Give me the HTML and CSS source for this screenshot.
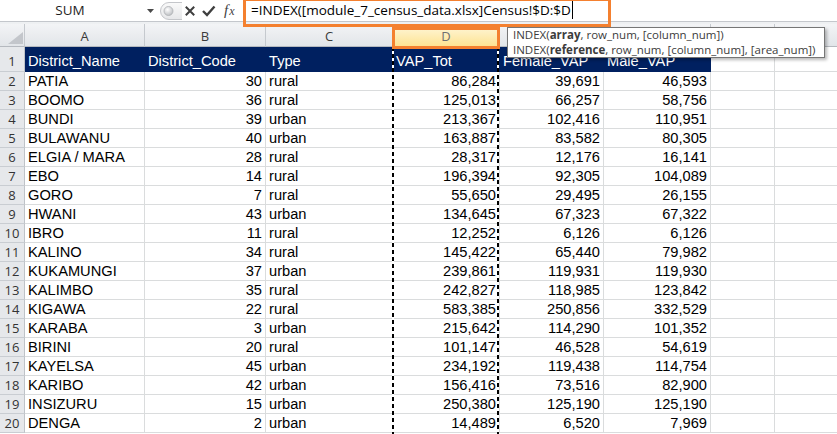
FILE: index.html
```html
<!DOCTYPE html>
<html>
<head>
<meta charset="utf-8">
<title>Excel INDEX</title>
<link rel="stylesheet" href="styles.css">
</head>
<body>
<div class="app">
  <div class="fbar">
    <div class="namebox">
      <span class="nm">SUM</span>
      <svg class="dd" width="7" height="4" viewBox="0 0 7 4"><polygon points="0,0 7,0 3.5,4" fill="#4a4a4a"/></svg>
    </div>
    <div class="tools">
      <svg width="85" height="21" viewBox="0 0 85 21">
        <defs>
          <radialGradient id="grip" cx="0.4" cy="0.35" r="0.7">
            <stop offset="0" stop-color="#ffffff"/>
            <stop offset="1" stop-color="#b9bcc0"/>
          </radialGradient>
          <linearGradient id="pill" x1="0" y1="0" x2="0" y2="1">
            <stop offset="0" stop-color="#fafafa"/>
            <stop offset="1" stop-color="#e6e7e9"/>
          </linearGradient>
        </defs>
        <path d="M24 2.5 H11 a8.5 8.5 0 0 0 0 17 H24" fill="url(#pill)" stroke="#c4c6ca" stroke-width="1"/>
        <circle cx="10.5" cy="11" r="4.5" fill="url(#grip)" stroke="#aeb1b5" stroke-width="0.8"/>
        <path d="M28.5 7.5 L35.5 14.5 M35.5 7.5 L28.5 14.5" stroke="#3f3f3f" stroke-width="2" stroke-linecap="square"/>
        <path d="M45 11 L49 15 L56.5 6.5" stroke="#3f3f3f" stroke-width="2.4" fill="none"/>
      </svg>
      <span class="fx"><i>f</i><i class="x">x</i></span>
    </div>
    <div class="finput"><span class="ftext">=INDEX([module_7_census_data.xlsx]Census!$D:$D</span></div>
  </div>
  <div class="gap"></div>
  <div class="sheet">
    <div class="ch corner"><svg width="15" height="12" viewBox="0 0 15 12"><polygon points="15,0 15,12 0,12" fill="#c3c6cb"/></svg></div>
    <div class="ch">A</div><div class="ch">B</div><div class="ch">C</div><div class="ch sel">D</div><div class="ch">E</div><div class="ch">F</div><div class="ch">G</div><div class="ch"></div>

    <div class="rh r1">1</div><div class="c h">District_Name</div><div class="c h">District_Code</div><div class="c h">Type</div><div class="c h">VAP_Tot</div><div class="c h">Female_VAP</div><div class="c h">Male_VAP</div><div class="c"></div><div class="c"></div>

    <div class="rh">2</div><div class="c">PATIA</div><div class="c n">30</div><div class="c">rural</div><div class="c n">86,284</div><div class="c n">39,691</div><div class="c n">46,593</div><div class="c"></div><div class="c"></div>
    <div class="rh">3</div><div class="c">BOOMO</div><div class="c n">36</div><div class="c">rural</div><div class="c n">125,013</div><div class="c n">66,257</div><div class="c n">58,756</div><div class="c"></div><div class="c"></div>
    <div class="rh">4</div><div class="c">BUNDI</div><div class="c n">39</div><div class="c">urban</div><div class="c n">213,367</div><div class="c n">102,416</div><div class="c n">110,951</div><div class="c"></div><div class="c"></div>
    <div class="rh">5</div><div class="c">BULAWANU</div><div class="c n">40</div><div class="c">urban</div><div class="c n">163,887</div><div class="c n">83,582</div><div class="c n">80,305</div><div class="c"></div><div class="c"></div>
    <div class="rh">6</div><div class="c">ELGIA / MARA</div><div class="c n">28</div><div class="c">rural</div><div class="c n">28,317</div><div class="c n">12,176</div><div class="c n">16,141</div><div class="c"></div><div class="c"></div>
    <div class="rh">7</div><div class="c">EBO</div><div class="c n">14</div><div class="c">rural</div><div class="c n">196,394</div><div class="c n">92,305</div><div class="c n">104,089</div><div class="c"></div><div class="c"></div>
    <div class="rh">8</div><div class="c">GORO</div><div class="c n">7</div><div class="c">rural</div><div class="c n">55,650</div><div class="c n">29,495</div><div class="c n">26,155</div><div class="c"></div><div class="c"></div>
    <div class="rh">9</div><div class="c">HWANI</div><div class="c n">43</div><div class="c">urban</div><div class="c n">134,645</div><div class="c n">67,323</div><div class="c n">67,322</div><div class="c"></div><div class="c"></div>
    <div class="rh">10</div><div class="c">IBRO</div><div class="c n">11</div><div class="c">rural</div><div class="c n">12,252</div><div class="c n">6,126</div><div class="c n">6,126</div><div class="c"></div><div class="c"></div>
    <div class="rh">11</div><div class="c">KALINO</div><div class="c n">34</div><div class="c">rural</div><div class="c n">145,422</div><div class="c n">65,440</div><div class="c n">79,982</div><div class="c"></div><div class="c"></div>
    <div class="rh">12</div><div class="c">KUKAMUNGI</div><div class="c n">37</div><div class="c">urban</div><div class="c n">239,861</div><div class="c n">119,931</div><div class="c n">119,930</div><div class="c"></div><div class="c"></div>
    <div class="rh">13</div><div class="c">KALIMBO</div><div class="c n">35</div><div class="c">rural</div><div class="c n">242,827</div><div class="c n">118,985</div><div class="c n">123,842</div><div class="c"></div><div class="c"></div>
    <div class="rh">14</div><div class="c">KIGAWA</div><div class="c n">22</div><div class="c">rural</div><div class="c n">583,385</div><div class="c n">250,856</div><div class="c n">332,529</div><div class="c"></div><div class="c"></div>
    <div class="rh">15</div><div class="c">KARABA</div><div class="c n">3</div><div class="c">urban</div><div class="c n">215,642</div><div class="c n">114,290</div><div class="c n">101,352</div><div class="c"></div><div class="c"></div>
    <div class="rh">16</div><div class="c">BIRINI</div><div class="c n">20</div><div class="c">rural</div><div class="c n">101,147</div><div class="c n">46,528</div><div class="c n">54,619</div><div class="c"></div><div class="c"></div>
    <div class="rh">17</div><div class="c">KAYELSA</div><div class="c n">45</div><div class="c">urban</div><div class="c n">234,192</div><div class="c n">119,438</div><div class="c n">114,754</div><div class="c"></div><div class="c"></div>
    <div class="rh">18</div><div class="c">KARIBO</div><div class="c n">42</div><div class="c">urban</div><div class="c n">156,416</div><div class="c n">73,516</div><div class="c n">82,900</div><div class="c"></div><div class="c"></div>
    <div class="rh">19</div><div class="c">INSIZURU</div><div class="c n">15</div><div class="c">urban</div><div class="c n">250,380</div><div class="c n">125,190</div><div class="c n">125,190</div><div class="c"></div><div class="c"></div>
    <div class="rh">20</div><div class="c">DENGA</div><div class="c n">2</div><div class="c">urban</div><div class="c n">14,489</div><div class="c n">6,520</div><div class="c n">7,969</div><div class="c"></div><div class="c"></div>
  </div>

  <div class="ants ants-l"></div>
  <div class="ants ants-r"></div>
  <div class="hl hl-formula"></div>
  <div class="hl hl-col"></div>
  <div class="tip">
    <div>INDEX(<b>array</b>, row_num, [column_num])</div>
    <div>INDEX(<b>reference</b>, row_num, [column_num], [area_num])</div>
  </div>
</div>
</body>
</html>
```

FILE: styles.css
```css
html, body {
  margin: 0;
  padding: 0;
  background: #fff;
  overflow: hidden;
}

.app {
  position: relative;
  width: 837px;
  height: 434px;
  overflow: hidden;
  font-family: "Liberation Sans", Arial, sans-serif;
}

/* formula bar */
.fbar {
  display: flex;
  height: 21px;
  border-bottom: 1px solid #c4c7cc;
  background: #fff;
}

.namebox {
  width: 158px;
  display: flex;
  align-items: center;
}

.nm {
  width: 140px;
  text-align: center;
  font-family: "Open Sans", sans-serif;
  font-size: 13.5px;
  color: #1e1e1e;
  line-height: 21px;
}

.dd {
  margin-left: 7px;
  margin-top: 1px;
}

.tools {
  width: 85px;
  position: relative;
  display: flex;
  align-items: center;
}

.fx {
  position: absolute;
  left: 66px;
  top: 1px;
  font-family: "Liberation Serif", serif;
  font-size: 15px;
  color: #3f3f3f;
  line-height: 19px;
}

.fx i {
  font-style: italic;
}

.fx .x {
  font-size: 12px;
  margin-left: 1px;
}

.finput {
  flex: 1;
  padding-left: 8px;
  font-family: "Open Sans", sans-serif;
  font-size: 13.5px;
  color: #000;
  line-height: 21px;
  white-space: nowrap;
}

.ftext {
  border-right: 1px solid #000;
  padding-right: 1px;
}

.gap {
  height: 2px;
  background: #eef0f2;
}

/* sheet */
.sheet {
  display: grid;
  grid-template-columns: 25px 120px 121px 127px 107px 104px 107px 64px 120px;
  grid-template-rows: 23px 25px repeat(19, 19px);
}

.ch {
  box-sizing: border-box;
  background: linear-gradient(#f3f4f6, #e2e5e9);
  border-right: 1px solid #c5c9ce;
  border-bottom: 1px solid #b5b9bf;
  font-family: "Open Sans", sans-serif;
  font-size: 13px;
  color: #3a3a3a;
  text-align: center;
  line-height: 20px;
  padding-top: 2px;
}

.ch.corner {
  display: flex;
  align-items: flex-end;
  justify-content: flex-end;
  padding: 0 1px 2px 0;
}

.ch.sel {
  background: linear-gradient(#fff8de, #fde393);
  color: #6f6f6f;
}

.rh {
  box-sizing: border-box;
  background: #e6e8eb;
  border-right: 1px solid #bfc3c8;
  border-bottom: 1px solid #c9cdd2;
  font-family: "Open Sans", sans-serif;
  font-size: 13px;
  color: #333;
  text-align: center;
  line-height: 19px;
}

.rh.r1 {
  padding-top: 5px;
}

.c {
  box-sizing: border-box;
  border-right: 1px solid #dadcdd;
  border-bottom: 1px solid #dadcdd;
  font-size: 14.67px;
  line-height: 19px;
  padding: 0 3px;
  white-space: nowrap;
  overflow: hidden;
  color: #000;
}

.n {
  text-align: right;
}

.c.h {
  background: #002060;
  border-color: #002060;
  color: #fff;
  padding-top: 5px;
}

/* overlays */
.ants {
  position: absolute;
  top: 47px;
  width: 2px;
  height: 387px;
  background: repeating-linear-gradient(to bottom, #000 0 4px, #fff 4px 7px);
}

.ants-l { left: 392px; }
.ants-r { left: 497px; }

.hl {
  position: absolute;
  box-sizing: border-box;
  border: 3px solid #f4802f;
}

.hl-formula {
  left: 243px;
  top: -2px;
  width: 368px;
  height: 29px;
}

.hl-col {
  left: 392px;
  top: 27px;
  width: 108px;
  height: 22px;
}

.tip {
  position: absolute;
  left: 507px;
  top: 27px;
  width: 318px;
  height: 31px;
  box-sizing: border-box;
  background: #fff;
  border: 1px solid #767676;
  box-shadow: 2px 2px 3px rgba(0, 0, 0, 0.28);
  padding: 0 0 0 5px;
  font-family: "Open Sans", sans-serif;
  font-size: 11.5px;
  line-height: 14.5px;
  color: #3c3c3c;
  white-space: nowrap;
}

.tip b {
  font-weight: 700;
}
```
